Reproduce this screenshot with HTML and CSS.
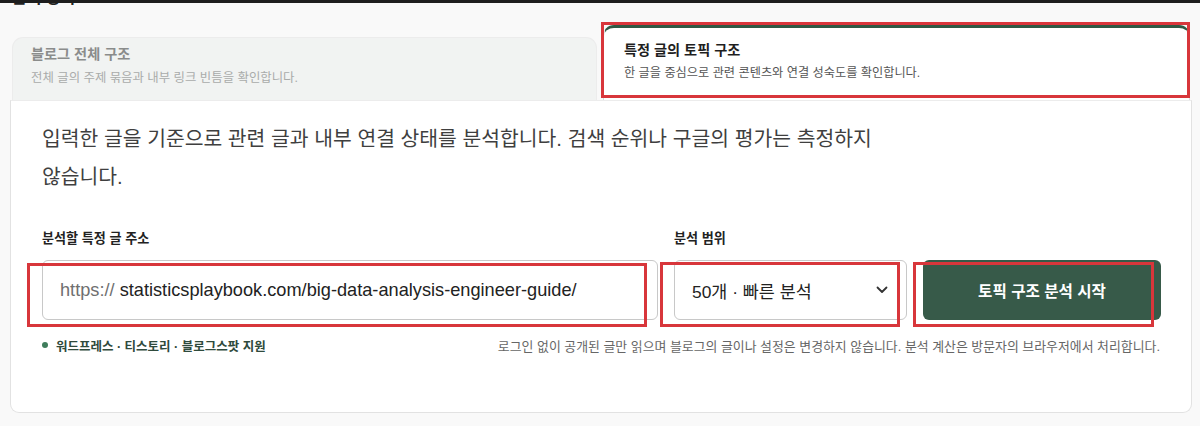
FILE: index.html
```html
<!DOCTYPE html>
<html lang="ko">
<head>
<meta charset="utf-8">
<title>분석 방식</title>
<link rel="stylesheet" href="styles.css">
</head>
<body>
<div class="topbar"></div>
<section class="section">
  <div class="heading-wrap"><h2 class="heading">분석 방식</h2></div>
  <div class="tabs">
    <div class="tab">
      <div class="tab-title">블로그 전체 구조</div>
      <div class="tab-desc">전체 글의 주제 묶음과 내부 링크 빈틈을 확인합니다.</div>
    </div>
    <div class="tab tab-active">
      <div class="tab-title">특정 글의 토픽 구조</div>
      <div class="tab-desc">한 글을 중심으로 관련 콘텐츠와 연결 성숙도를 확인합니다.</div>
    </div>
  </div>
  <div class="panel">
    <p class="intro">입력한 글을 기준으로 관련 글과 내부 연결 상태를 분석합니다. 검색 순위나 구글의 평가는 측정하지 않습니다.</p>
    <div class="form-grid">
      <label class="label">분석할 특정 글 주소</label>
      <label class="label">분석 범위</label>
      <span></span>
      <div class="field url"><span class="prefix">https://</span>&nbsp;statisticsplaybook.com/big-data-analysis-engineer-guide/</div>
      <div class="field select">
        <span>50개 · 빠른 분석</span>
        <svg class="chev" width="12" height="8" viewBox="0 0 12 8"><path d="M1.5 1.5 L6 6 L10.5 1.5" fill="none" stroke="#333" stroke-width="1.8" stroke-linecap="round" stroke-linejoin="round"/></svg>
      </div>
      <button class="btn" type="button">토픽 구조 분석 시작</button>
    </div>
    <div class="hints">
      <div class="support"><span class="dot"></span>워드프레스 · 티스토리 · 블로그스팟 지원</div>
      <div class="note">로그인 없이 공개된 글만 읽으며 블로그의 글이나 설정은 변경하지 않습니다. 분석 계산은 방문자의 브라우저에서 처리합니다.</div>
    </div>
  </div>
</section>
<div class="annot a1"></div>
<div class="annot a2"></div>
<div class="annot a3"></div>
<div class="annot a4"></div>
</body>
</html>
```
FILE: styles.css
```css
* { box-sizing: border-box; }
html, body { margin: 0; padding: 0; }
body {
  background: #f9f9f9;
  font-family: "Liberation Sans", "Noto Sans CJK KR", sans-serif;
  color: #222;
  width: 1200px;
  height: 426px;
  overflow: hidden;
  position: relative;
  word-break: keep-all;
}
.topbar {
  position: fixed;
  top: 0; left: 0; right: 0;
  height: 3px;
  background: #1e1e1e;
  z-index: 5;
}
.section { padding: 0 8px 0 10px; }
.heading-wrap {
  display: flex;
  height: 7px;
  align-items: flex-end;
}
.heading {
  margin: 0 0 -1px 2px;
  font-size: 16px;
  line-height: 20px;
  font-weight: 700;
  color: #222;
}
.tabs {
  display: flex;
  align-items: flex-end;
  gap: 6px;
  margin: 18px 2px 0 2px;
}
.tab {
  flex: 0 0 585px;
  height: 63px;
  background: #f1f3f2;
  border: 1px solid #ececec;
  border-bottom: none;
  border-radius: 11px 11px 0 0;
  padding: 6px 18px 0;
}
.tab-title {
  font-size: 14.2px;
  line-height: 20px;
  font-weight: 700;
  color: #8a8c8b;
}
.tab-desc {
  margin-top: 6px;
  font-size: 12.4px;
  line-height: 17px;
  color: #a9abaa;
}
.tab-active {
  flex: 1 1 auto;
  height: 75px;
  background: #fff;
  border: 1px solid #dcdcdc;
  border-top: 3px solid #2f5944;
  border-bottom: none;
  padding: 12px 20px 0;
}
.tab-active .tab-title { color: #1f1f1f; }
.tab-active .tab-desc { margin-top: 5px; font-size: 12.2px; color: #555; }

.panel {
  width: 1182px;
  height: 313px;
  background: #fff;
  border: 1px solid #e2e2e2;
  border-top-color: #ececec;
  border-radius: 0 0 9px 9px;
  padding: 19px 31px 0 31px;
}
.intro {
  margin: 0;
  width: 870px;
  font-size: 20.4px;
  line-height: 38px;
  color: #3f3f3f;
}
.form-grid {
  display: grid;
  grid-template-columns: 616px 233px 1fr;
  column-gap: 16px;
  row-gap: 12px;
  margin-top: 34px;
}
.label {
  font-size: 13.1px;
  line-height: 18px;
  font-weight: 700;
  color: #222;
}
.field {
  height: 60px;
  border: 1px solid #c8c8c8;
  border-radius: 6px;
  background: #fff;
  display: flex;
  align-items: center;
  padding: 0 17px;
  font-size: 17.4px;
  color: #222;
  white-space: nowrap;
}
.url { font-size: 18.2px; }
.prefix { color: #6f6f6f; }
.select { justify-content: space-between; padding-right: 18px; }
.chev { display: block; }
.btn {
  height: 60px;
  border: none;
  border-radius: 6px;
  background: #375a49;
  color: #fff;
  font-family: inherit;
  font-size: 15.6px;
  font-weight: 700;
  margin-right: -1px;
}
.hints {
  display: flex;
  justify-content: space-between;
  align-items: center;
  margin-top: 17px;
  height: 16px;
}
.support {
  display: flex;
  align-items: center;
  font-size: 12.5px;
  font-weight: 700;
  color: #2f4a3c;
}
.dot {
  width: 6px;
  height: 6px;
  border-radius: 50%;
  background: #3f7d5c;
  margin: 0 8px 0 0;
}
.note {
  font-size: 12.9px;
  color: #666;
}
.annot {
  position: absolute;
  border: 3px solid #d8363b;
  z-index: 10;
  pointer-events: none;
}
.a1 { left: 601px; top: 22px; width: 589px; height: 76px; }
.a2 { left: 27px; top: 263px; width: 620px; height: 64px; }
.a3 { left: 660px; top: 262px; width: 240px; height: 65px; }
.a4 { left: 913px; top: 262px; width: 241px; height: 65px; }
```
